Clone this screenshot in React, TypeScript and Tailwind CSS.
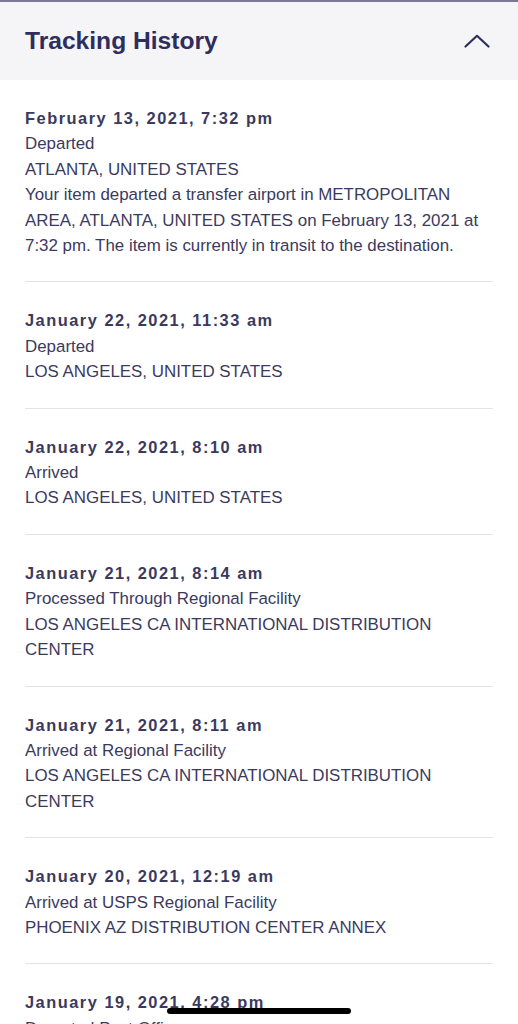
const events = [
  {
    date: "February 13, 2021, 7:32 pm",
    lines: [
      "Departed",
      "ATLANTA, UNITED STATES",
      "Your item departed a transfer airport in METROPOLITAN AREA, ATLANTA, UNITED STATES on February 13, 2021 at 7:32 pm. The item is currently in transit to the destination.",
    ],
  },
  {
    date: "January 22, 2021, 11:33 am",
    lines: ["Departed", "LOS ANGELES, UNITED STATES"],
  },
  {
    date: "January 22, 2021, 8:10 am",
    lines: ["Arrived", "LOS ANGELES, UNITED STATES"],
  },
  {
    date: "January 21, 2021, 8:14 am",
    lines: [
      "Processed Through Regional Facility",
      "LOS ANGELES CA INTERNATIONAL DISTRIBUTION CENTER",
    ],
  },
  {
    date: "January 21, 2021, 8:11 am",
    lines: [
      "Arrived at Regional Facility",
      "LOS ANGELES CA INTERNATIONAL DISTRIBUTION CENTER",
    ],
  },
  {
    date: "January 20, 2021, 12:19 am",
    lines: [
      "Arrived at USPS Regional Facility",
      "PHOENIX AZ DISTRIBUTION CENTER ANNEX",
    ],
  },
  {
    date: "January 19, 2021, 4:28 pm",
    lines: ["Departed Post Office", "PHOENIX, AZ 85034"],
  },
];

const ChevronUp = () => (
  <svg width="26" height="14" viewBox="0 0 26 14" fill="none">
    <path
      d="M1.5 12.5 L13 1.8 L24.5 12.5"
      stroke="#2f2e5c"
      strokeWidth="2.2"
      strokeLinecap="round"
      strokeLinejoin="round"
    />
  </svg>
);

export default function App() {
  return (
    <div
      className="relative h-[1024px] w-[518px] overflow-hidden bg-white text-[#3b3a5e]"
      style={{ fontFamily: '"Liberation Sans", Arial, sans-serif' }}
    >
      <div className="h-[2px] bg-[#7b7597]" />

      {/* Header */}
      <div className="flex h-[78px] items-center justify-between bg-[#f5f5f7] pl-[25px] pr-[28px]">
        <h2 className="text-[24.6px] font-bold text-[#2e2d5e]">
          Tracking History
        </h2>
        <ChevronUp />
      </div>

      {/* Events */}
      <div className="px-[25px]">
        {events.map((ev, i) => (
          <div
            key={i}
            className="border-b border-[#e4e4e8] pb-[23px] pt-[26px] text-[16.9px] leading-[25.4px]"
          >
            <div className="text-[16.4px] font-bold tracking-[1.5px]">
              {ev.date}
            </div>
            {ev.lines.map((l, j) => (
              <div key={j}>{l}</div>
            ))}
          </div>
        ))}
      </div>

      {/* home indicator */}
      <div className="absolute bottom-[10px] left-[167px] h-[6px] w-[184px] rounded-full bg-black" />
    </div>
  );
}
